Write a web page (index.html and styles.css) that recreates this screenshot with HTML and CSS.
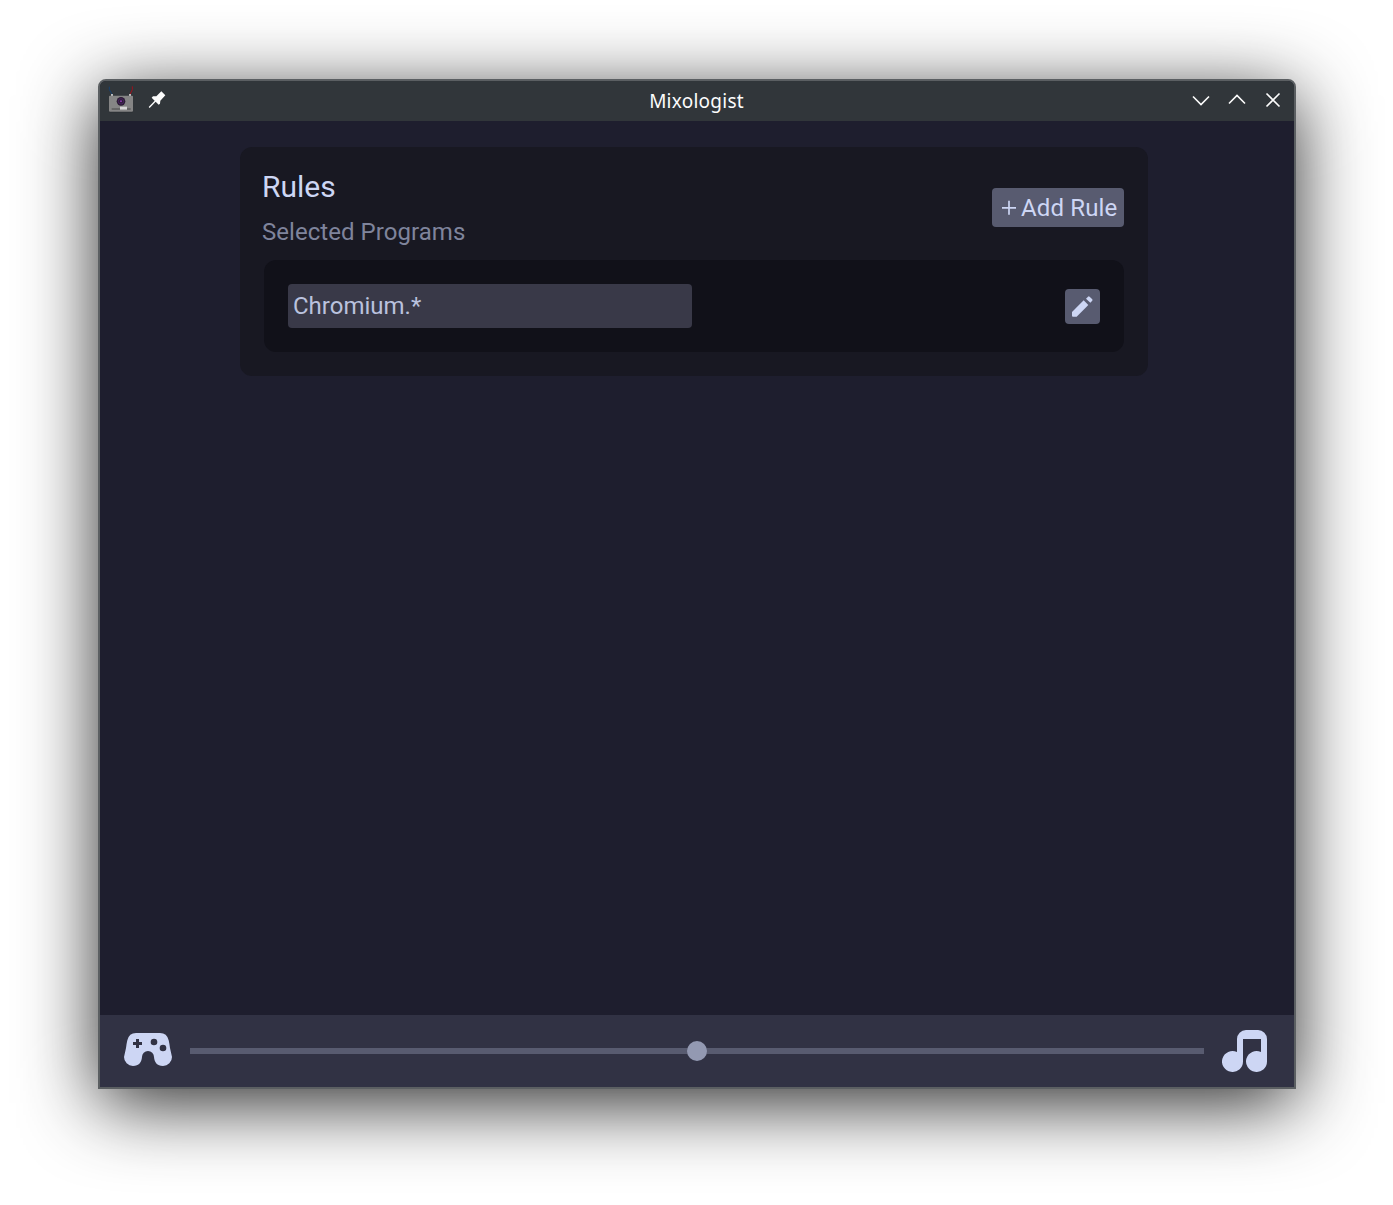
FILE: index.html
```
<!DOCTYPE html>
<html lang="en">
<head>
<meta charset="utf-8">
<title>Mixologist</title>
<link rel="stylesheet" href="styles.css">
</head>
<body>
<div class="window">
  <header class="titlebar">
    <div class="title-left">
      <svg class="app-icon" width="26" height="28" viewBox="0 0 78 84">
        <path d="M4 2v9l8 14" fill="none" stroke="#17406f" stroke-width="3"/>
        <path d="M73 1v10l-7 14" fill="none" stroke="#a0101c" stroke-width="3"/>
        <path d="M12 24v7M66 24v7" stroke="#d8d8d8" stroke-width="5"/>
        <rect x="4" y="74" width="71" height="5" rx="2" fill="#25292c"/>
        <rect x="3" y="29" width="72" height="48" rx="3" fill="#858585"/>
        <circle cx="39" cy="46" r="13" fill="#2b1d35"/>
        <circle cx="39" cy="46" r="8" fill="none" stroke="#49235f" stroke-width="3"/>
        <circle cx="39" cy="46" r="3" fill="#8a3aae"/>
        <path d="M11 69h57" stroke="#474747" stroke-width="3"/>
        <rect x="36" y="62" width="21" height="9" fill="#d6d6d6"/>
      </svg>
      <svg class="pin-icon" width="18" height="18" viewBox="0 0 54 54">
        <path d="M40 1 52 13 37 29 36 38 32 41 23 32 5 51 2 48 20 29 11 20 15 16 25 16Z" fill="#fcfcfc"/>
      </svg>
    </div>
    <h1 class="title">Mixologist</h1>
    <div class="controls">
      <svg width="18" height="18" viewBox="0 0 18 18"><path d="M1 5.500 9 13.500 17 5.500"/></svg>
      <svg width="18" height="18" viewBox="0 0 18 18"><path d="M1 12.500 9 4.500 17 12.500"/></svg>
      <svg width="18" height="18" viewBox="0 0 18 18"><path d="M2.500 2.500 15.500 15.500M15.500 2.500 2.500 15.500"/></svg>
    </div>
  </header>
  <main class="content">
    <section class="card">
      <div class="card-head">
        <div class="headings">
          <h2>Rules</h2>
          <p>Selected Programs</p>
        </div>
        <button class="add">
          <svg width="16" height="16" viewBox="0 0 16 16"><path d="M8 .8v14M1 7.800h14" stroke="#cdd6f4" stroke-width="1.700"/></svg>
          <span>Add Rule</span>
        </button>
      </div>
      <div class="rule">
        <div class="field">Chromium.*</div>
        <button class="edit" aria-label="Edit">
          <svg width="21" height="21" viewBox="0 0 63 63" fill="#cdd6f4">
            <path d="M0 48 35 13 49 27 14 62H3Q0 62 0 59Z"/>
            <path d="M42 8 48 2Q50-1 53 2L60 9Q63 12 60 15L55 20Z"/>
          </svg>
        </button>
      </div>
    </section>
  </main>
  <footer class="mixer">
    <svg class="gamepad" width="48" height="33" viewBox="0 0 144 99">
      <path fill="#cdd6f4" fill-rule="evenodd" d="M36 0H108Q129 0 134 22Q137 35 138 45L144 72A27 27 0 0 1 117 99C99 99 91 87 90 72A18 18 0 0 0 54 72C53 87 45 99 27 99A27 27 0 0 1 0 72L6 45Q7 35 10 22Q15 0 36 0ZM36 18V27H27V36H36V45H45V36H54V27H45V18ZM80 27a10 10 0 1 0 20 0a10 10 0 1 0-20 0ZM107 45a10 10 0 1 0 20 0a10 10 0 1 0-20 0Z"/>
    </svg>
    <div class="track"><div class="thumb"></div></div>
    <svg class="music" width="45" height="42" viewBox="0 0 135 126">
      <path fill="#cdd6f4" d="M45 66V27A27 27 0 0 1 72 0H108A27 27 0 0 1 135 27V94.500A31.500 31.500 0 1 1 117 66V27H63V94.500A31.500 31.500 0 1 1 45 66Z"/>
    </svg>
  </footer>
</div>
</body>
</html>
```
FILE: styles.css
```
* { box-sizing: border-box; }
body {
  margin: 0;
  height: 1205px;
  padding: 79px 97px 116px 98px;
  background: #fff;
  font-family: Roboto, sans-serif;
  overflow: hidden;
}
.window {
  height: 1010px;
  display: flex;
  flex-direction: column;
  border: 2px solid #5b5f62;
  border-radius: 8px 8px 0 0;
  background: #1e1e2e;
  box-shadow: 0 15px 76px -1px rgba(0, 0, 0, .85);
  overflow: hidden;
}
.titlebar {
  flex: none;
  height: 40px;
  display: grid;
  grid-template-columns: 1fr auto 1fr;
  align-items: center;
  padding: 0 12px 0 8px;
  background: #31363a;
}
.title-left { display: flex; align-items: center; gap: 14px; }
.app-icon { margin-top: -2px; }
.pin-icon { margin-top: -2px; }
.title {
  margin: 0 0 0 3px;
  font: 400 19px/26px "Noto Sans", sans-serif;
  letter-spacing: .25px;
  color: #fcfcfc;
}
.controls { display: flex; justify-content: flex-end; gap: 18px; margin-top: -2px; }
.controls path { fill: none; stroke: #fcfcfc; stroke-width: 1.6; }
.content { flex: 1; padding: 26px 146px 0 140px; }
.card {
  height: 229px;
  padding: 22px 24px 24px 22px;
  border-radius: 12px;
  background: #181822;
}
.card-head { display: flex; justify-content: space-between; align-items: center; height: 77px; }
h2 { margin: 0; font-size: 30px; line-height: 36px; font-weight: 400; color: #cdd6f4; }
.headings p { margin: 13px 0 0; font-size: 24px; line-height: 28px; letter-spacing: .05px; color: #7f849c; }
button { border: 0; padding: 0; background: #585b70; border-radius: 4px; display: flex; align-items: center; }
.add {
  width: 132px;
  height: 39px;
  padding-left: 9px;
  gap: 4px;
  font: 24px/39px Roboto, sans-serif;
  letter-spacing: .15px;
  color: #cdd6f4;
  white-space: nowrap;
}
.add svg { flex: none; }
.add span { padding-top: 2px; }
.rule {
  height: 92px;
  margin: 14px 0 0 2px;
  padding: 0 24px;
  display: flex;
  align-items: center;
  justify-content: space-between;
  border-radius: 12px;
  background: #111119;
}
.field {
  width: 404px;
  height: 44px;
  padding-left: 5px;
  border-radius: 4px;
  background: #393948;
  color: #bac2de;
  font-size: 24px;
  line-height: 44px;
}
.edit { width: 35px; height: 35px; justify-content: center; }
.mixer {
  flex: none;
  height: 72px;
  display: flex;
  align-items: center;
  gap: 18px;
  padding: 0 27px 0 24px;
  background: #313244;
}
.gamepad { margin-bottom: 3px; }
.track { flex: 1; height: 6px; display: flex; align-items: center; justify-content: center; background: #585b70; }
.thumb { flex: none; width: 20px; height: 20px; border-radius: 50%; background: #9399b2; }
```
